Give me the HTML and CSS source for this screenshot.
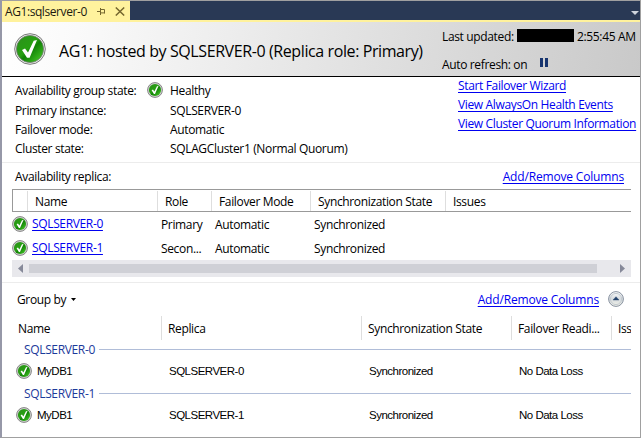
FILE: index.html
```html
<!DOCTYPE html>
<html lang="en">
<head>
<meta charset="utf-8">
<title>AG1:sqlserver-0</title>
<link rel="stylesheet" href="styles.css">
</head>
<body>
<svg class="defs" width="0" height="0" aria-hidden="true">
  <defs>
    <linearGradient id="green" x1="0" y1="0" x2="1" y2="1">
      <stop offset="0" stop-color="#2c8f1c"/><stop offset=".45" stop-color="#27a012"/><stop offset=".55" stop-color="#118206"/><stop offset="1" stop-color="#4fd52c"/>
    </linearGradient>
    <linearGradient id="knob" x1="0" y1="0" x2="0" y2="1">
      <stop offset="0" stop-color="#ffffff"/><stop offset=".5" stop-color="#d5dade"/><stop offset="1" stop-color="#f4f4ea"/>
    </linearGradient>
    <symbol id="ok" viewBox="0 0 16 16">
      <circle cx="8" cy="8" r="7.4" fill="#d4d4d4" stroke="#858585" stroke-width="1"/>
      <circle cx="8" cy="8" r="6.1" fill="url(#green)"/>
      <path d="M4.6 8.2 L6 7.6 L7.3 9.5 L10 4.2 L11.5 4 L8 12 L6.9 12 Z" fill="#fff"/>
    </symbol>
    <symbol id="ok-large" viewBox="0 0 32 32">
      <circle cx="16" cy="16" r="15.3" fill="#f3f3f3" stroke="#777" stroke-width="1"/>
      <circle cx="16" cy="16" r="13.6" fill="url(#green)" stroke="#757a75" stroke-width=".8"/>
      <path d="M8 17 L11 15.4 L14 19.6 L19.7 7.7 L23 7 L15.6 24.8 L13 24.8 Z" fill="#fff"/>
    </symbol>
  </defs>
</svg>
<div class="window">
  <div class="tabbar">
    <div class="tab">
      <span class="tab-title">AG1:sqlserver-0</span>
      <svg class="pin" width="9" height="9" viewBox="0 0 9 9"><path d="M0 4.5H3M3.5 1V8M3.5 2.5H7.5V6.5M3.5 5.9H7.5" fill="none" stroke="#75672f"/></svg>
      <svg class="close" width="10" height="9" viewBox="0 0 10 9"><path d="M.8 .5L9.2 8.5M9.2 .5L.8 8.5" fill="none" stroke="#75672f" stroke-width="1.5"/></svg>
    </div>
    <svg class="tab-menu" width="8" height="4" viewBox="0 0 8 4"><path d="M0 0H8L4 4Z" fill="#ced4dd"/></svg>
  </div>
  <header class="header">
    <svg class="header-icon" width="32" height="32"><use href="#ok-large"/></svg>
    <h1 class="title">AG1: hosted by SQLSERVER-0 (Replica role: Primary)</h1>
    <div class="status">
      <div class="status-row updated"><span class="s-label">Last updated:</span><span class="redacted"></span><span class="s-time">2:55:45 AM</span></div>
      <div class="status-row"><span class="s-auto">Auto refresh: on</span><span class="pause"></span></div>
    </div>
  </header>
  <section class="summary">
    <div class="facts">
      <span>Availability group state:</span><svg class="ok" width="16" height="16"><use href="#ok"/></svg><span>Healthy</span>
      <span>Primary instance:</span><i></i><span class="fact-server">SQLSERVER-0</span>
      <span>Failover mode:</span><i></i><span>Automatic</span>
      <span>Cluster state:</span><i></i><span class="fact-cluster">SQLAGCluster1 (Normal Quorum)</span>
    </div>
    <nav class="links">
      <a href="#" class="l1">Start Failover Wizard</a>
      <a href="#" class="l2">View AlwaysOn Health Events</a>
      <a href="#" class="l3">View Cluster Quorum Information</a>
    </nav>
  </section>
  <section class="replicas">
    <div class="caption"><span>Availability replica:</span><a href="#" class="columns">Add/Remove Columns</a></div>
    <div class="r-head"><span></span><span>Name</span><span>Role</span><span>Failover Mode</span><span>Synchronization State</span><span>Issues</span></div>
    <div class="r-row"><svg class="ok" width="16" height="16"><use href="#ok"/></svg><a href="#">SQLSERVER-0</a><span>Primary</span><span>Automatic</span><span>Synchronized</span></div>
    <div class="r-row"><svg class="ok" width="16" height="16"><use href="#ok"/></svg><a href="#">SQLSERVER-1</a><span>Secon...</span><span>Automatic</span><span>Synchronized</span></div>
    <div class="scrollbar">
      <svg width="5" height="9" viewBox="0 0 5 9"><path d="M5 0V9L0 4.5Z" fill="#868999"/></svg>
      <div class="thumb"></div>
      <svg width="5" height="9" viewBox="0 0 5 9"><path d="M0 0V9L5 4.5Z" fill="#868999"/></svg>
    </div>
  </section>
  <section class="databases">
    <div class="toolbar">
      <span class="group-by">Group by</span>
      <svg class="caret" width="5" height="3" viewBox="0 0 5 3"><path d="M0 0H5L2.5 3Z" fill="#000"/></svg>
      <a href="#" class="columns">Add/Remove Columns</a>
      <svg class="collapse" width="16" height="16" viewBox="0 0 16 16"><circle cx="8" cy="8" r="7.4" fill="url(#knob)" stroke="#8791a0"/><circle cx="8" cy="8" r="5.6" fill="none" stroke="#c3cad0"/><path d="M8 5.7L11 9H5Z" fill="#25446d" stroke="#25446d" stroke-width=".4"/></svg>
    </div>
    <div class="d-head"><span>Name</span><span>Replica</span><span>Synchronization State</span><span>Failover Readi...</span><span>Iss</span></div>
    <div class="group"><span>SQLSERVER-0</span></div>
    <div class="d-row"><svg class="ok" width="16" height="16"><use href="#ok"/></svg><span class="db">MyDB1</span><span class="srv">SQLSERVER-0</span><span class="sync">Synchronized</span><span>No Data Loss</span></div>
    <div class="group"><span>SQLSERVER-1</span></div>
    <div class="d-row"><svg class="ok" width="16" height="16"><use href="#ok"/></svg><span class="db">MyDB1</span><span class="srv">SQLSERVER-1</span><span class="sync">Synchronized</span><span>No Data Loss</span></div>
  </section>
</div>
</body>
</html>
```
FILE: styles.css
```css
* { box-sizing: border-box; }
body {
  margin: 0;
  font: 12px/16px "Open Sans", "Noto Sans", sans-serif;
  letter-spacing: -0.35px;
  color: #000;
  background: #fff;
}
.defs { position: absolute; }
svg { display: block; flex: none; }
span, a { white-space: nowrap; }
a { color: #0000f0; text-decoration: underline; text-underline-offset: 2px; text-decoration-thickness: 1px; text-decoration-skip-ink: none; }
.window {
  width: 641px; height: 438px; overflow: hidden;
  border: 1px solid #a0a0a0; border-left: 2px solid #9698a8;
}
.tabbar {
  height: 21px; display: flex; align-items: center; justify-content: space-between;
  background: #293955; border-bottom: 2px solid #fff29d; padding-right: 1px;
}
.tab { width: 128px; height: 21px; padding: 3px 0 0 3px; display: flex; align-self: flex-start; background: #fff29d; color: #1c1a10; }
.tab-title { width: 92px; letter-spacing: -0.42px; }
.pin { margin-top: 3px; }
.close { margin: 3px 0 0 9px; }
.tab-menu { margin-top: 5px; }
.header {
  height: 55px; display: flex; padding-left: 12px; border-bottom: 1px solid #000;
  background: linear-gradient(100deg, #fff 0%, #fafafa 12%, #c9c9c9 100%);
}
.header-icon { margin-top: 11px; }
.title { margin: 18px 0 0 13px; width: 381px; font-size: 16px; line-height: 22px; font-weight: 400; letter-spacing: -0.4px; white-space: nowrap; }
.status { padding-top: 6px; }
.status-row { display: flex; align-items: center; height: 28px; margin-left: 2px; }
.updated { height: 15px; margin-bottom: 6px; }
.s-label { width: 75px; }
.redacted { width: 57px; height: 13px; background: #000; }
.s-label, .s-time { padding-top: 2px; }
.s-time { margin-left: 3px; }
.s-auto { width: 98px; padding-top: 3px; }
.pause { width: 8px; height: 9px; margin-top: -2px; border: solid #17356f; border-width: 0 3px; }
.summary { height: 86px; display: flex; border-bottom: 1px solid #ececec; }
.facts { width: 443px; padding: 2px 0 0 13px; display: grid; grid-template-columns: 132px 23px 1fr; grid-template-rows: 21px 19px 19px 19px; align-items: center; }
.facts span, .caption span, .caption a, .r-row span, .group-by, .group span { padding-top: 2px; }
.links { padding: 0 0 0 13px; line-height: 19px; display: flex; flex-direction: column; margin-top: -1px; }
.replicas { height: 120px; border-bottom: 1px solid #ececec; padding: 0 9px 0 10px; }
.caption { height: 26px; padding: 0 7px 0 3px; display: flex; align-items: center; justify-content: space-between; }
.columns { letter-spacing: -0.17px; }
.r-head, .r-row { display: grid; grid-template-columns: 15px 130px 54px 99px 135px 1fr; align-items: center; }
.r-head { height: 23px; border: solid #999; border-width: 1px 0 1px 1px; }
.r-head span { height: 20px; line-height: 22px; padding-left: 7px; border-right: 1px solid #dedede; }
.r-head span:last-child { border: 0; }
.r-row { height: 24px; grid-template-columns: 20px 129px 54px 99px 1fr; }
.scrollbar { height: 17px; background: #e8e8ec; display: flex; align-items: center; padding: 0 6px; }
.thumb { width: 568px; height: 9px; margin: 0 23px 0 6px; background: #cfd0d6; }
.databases { padding: 0 9px 0 10px; }
.toolbar { height: 33px; display: flex; align-items: center; padding: 0 7px 1px 5px; }
.caret { margin-left: 5px; }
.toolbar .columns { margin: 2px 9px 0 auto; }
.d-head { display: grid; grid-template-columns: 150px 200px 150px 100px 1fr; height: 24px; line-height: 26px; overflow: hidden; }
.d-head span { padding-left: 6px; border-right: 1px solid #dedede; }
.d-head span:last-child { border: 0; overflow: hidden; }
.group { height: 18px; display: flex; align-items: center; padding-left: 12px; color: #1c3a9b; }
.group span { width: 75px; }
.group::after { content: ""; flex: 1; height: 1px; background: #b0bdd8; }
.d-row { height: 26px; display: grid; grid-template-columns: 21px 132px 200px 150px 1fr; align-items: center; padding-left: 4px; font: 11.5px/16px "Liberation Sans", Arial, sans-serif; letter-spacing: -0.5px; }
```
